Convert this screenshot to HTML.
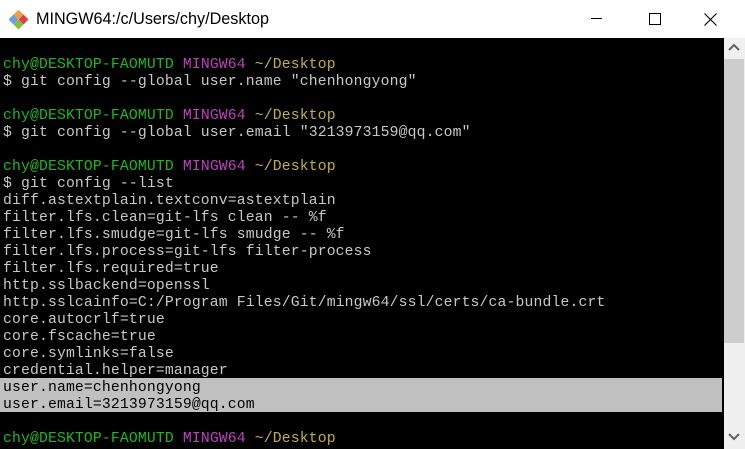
<!DOCTYPE html>
<html><head><meta charset="utf-8"><style>
*{margin:0;padding:0;box-sizing:border-box}
body{width:745px;height:449px;overflow:hidden;background:#fff;position:relative;font-family:"Liberation Sans",sans-serif}
#title{position:absolute;left:0;top:0;width:745px;height:38px;background:#fff}
#title .t{position:absolute;left:36px;top:10px;font-size:16.2px;color:#000}
#term{position:absolute;left:0;top:38px;width:724px;height:411px;background:#000}
pre{position:absolute;left:3px;top:18.5px;font-family:"Liberation Mono",monospace;font-size:14.75px;letter-spacing:0.14px;line-height:17px;color:#c8c8c8}
.g{color:#1fb81f}.m{color:#bf40bf}.y{color:#c0b040}
#hl{position:absolute;left:0;top:339.5px;width:722px;height:34px;background:#c0c0c0}
#sb{position:absolute;left:724px;top:38px;width:21px;height:411px;background:#f0f0f0}
#thumb{position:absolute;left:724px;top:59px;width:20px;height:284px;background:#cdcdcd}
</style></head><body>
<div id="title">
<svg style="position:absolute;left:9px;top:10px" width="20" height="20" viewBox="0 0 20 20">
<rect x="6" y="1" width="7" height="7" fill="#f0a040" transform="rotate(45 9.5 4.5)"/>
<rect x="1" y="6" width="7" height="7" fill="#6aa0e0" transform="rotate(45 4.5 9.5)"/>
<rect x="11" y="6" width="7" height="7" fill="#e04040" transform="rotate(45 14.5 9.5)"/>
<rect x="6" y="11" width="7" height="7" fill="#80c040" transform="rotate(45 9.5 14.5)"/>
</svg>
<div class="t">MINGW64:/c/Users/chy/Desktop</div>
<div style="position:absolute;left:591px;top:18px;width:11px;height:1px;background:#000"></div>
<div style="position:absolute;left:649px;top:13px;width:12px;height:12px;border:1px solid #000"></div>
<svg style="position:absolute;left:704px;top:13px" width="13" height="13"><path d="M0.5 0.5L12.5 12.5M12.5 0.5L0.5 12.5" stroke="#000" stroke-width="1.1"/></svg>
</div>
<div id="term">
<div id="hl"></div>
<pre><span class="g">chy@DESKTOP-FAOMUTD</span> <span class="m">MINGW64</span> <span class="y">~/Desktop</span>
$ git config --global user.name "chenhongyong"

<span class="g">chy@DESKTOP-FAOMUTD</span> <span class="m">MINGW64</span> <span class="y">~/Desktop</span>
$ git config --global user.email "3213973159@qq.com"

<span class="g">chy@DESKTOP-FAOMUTD</span> <span class="m">MINGW64</span> <span class="y">~/Desktop</span>
$ git config --list
diff.astextplain.textconv=astextplain
filter.lfs.clean=git-lfs clean -- %f
filter.lfs.smudge=git-lfs smudge -- %f
filter.lfs.process=git-lfs filter-process
filter.lfs.required=true
http.sslbackend=openssl
http.sslcainfo=C:/Program Files/Git/mingw64/ssl/certs/ca-bundle.crt
core.autocrlf=true
core.fscache=true
core.symlinks=false
credential.helper=manager
<span style="color:#000">user.name=chenhongyong
user.email=3213973159@qq.com</span>

<span class="g">chy@DESKTOP-FAOMUTD</span> <span class="m">MINGW64</span> <span class="y">~/Desktop</span></pre>
</div>
<div id="sb"></div>
<div id="thumb"></div>
<svg style="position:absolute;left:728px;top:43px" width="12" height="8"><path d="M1 7L6 2L11 7" stroke="#606060" stroke-width="2" fill="none"/></svg>
<svg style="position:absolute;left:728px;top:433px" width="12" height="8"><path d="M1 1L6 6L11 1" stroke="#606060" stroke-width="2" fill="none"/></svg>
</body></html>
